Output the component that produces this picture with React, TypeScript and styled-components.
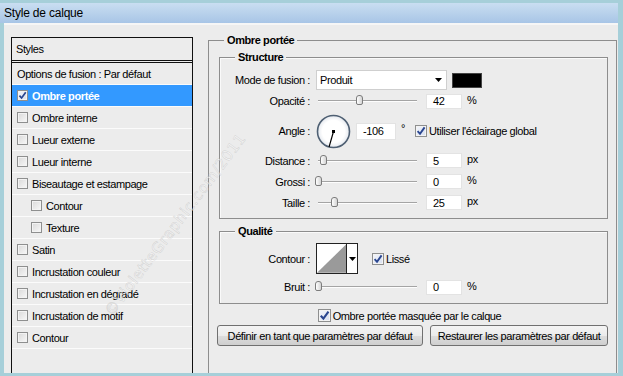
import React from 'react';
import styled, { createGlobalStyle } from 'styled-components';

const GlobalStyle = createGlobalStyle`
  html, body {
    margin: 0;
    padding: 0;
    background: #a6cfd9;
  }
  body {
    font-family: 'Liberation Sans', Arial, sans-serif;
    font-size: 11px;
    letter-spacing: -0.4px;
    color: #000;
  }
`;

const Frame = styled.div`
  position: relative;
  width: 623px;
  height: 376px;
  box-sizing: border-box;
  padding: 3px 5px 3px 0;
  background: #a6cfd9;
  display: flex;
  flex-direction: column;
  overflow: hidden;
`;

const TitleBar = styled.div`
  height: 20px;
  padding-left: 4px;
  display: flex;
  align-items: center;
  background: linear-gradient(to bottom, #c9def1, #a8c5e6);
  font-size: 12px;
  letter-spacing: -0.2px;
`;

const Body = styled.div`
  flex: 1;
  margin-left: 4px;
  border-top: 2px solid #f6f6f6;
  background: #ececec;
  display: flex;
  padding: 12px 0 0 7px;
  min-height: 0;
`;

/* ---------- left list ---------- */

const StylesPanel = styled.div`
  width: 182px;
  box-sizing: border-box;
  border: 1px solid #111;
  border-bottom: none;
  background: #ececec;
  display: flex;
  flex-direction: column;
`;

const PanelHead = styled.div`
  height: 22px;
  padding-left: 4px;
  display: flex;
  align-items: center;
  border-bottom: 3px double #111;
`;

const ListRow = styled.div<{ $selected?: boolean; $indent?: boolean }>`
  height: 21px;
  border-bottom: 1px solid #fbfbfb;
  display: flex;
  align-items: center;
  gap: 4px;
  padding-left: ${(p) => (p.$indent ? '19px' : '5px')};
  background: ${(p) => (p.$selected ? '#3399ff' : 'transparent')};
  color: ${(p) => (p.$selected ? '#fff' : '#000')};
  font-weight: ${(p) => (p.$selected ? 'bold' : 'normal')};
`;

const Box = styled.span<{ $checked?: boolean; $size: number }>`
  width: ${(p) => p.$size}px;
  height: ${(p) => p.$size}px;
  box-sizing: border-box;
  border: 1px solid #8e8f8f;
  flex: none;
  display: inline-flex;
  align-items: center;
  justify-content: center;
  background: ${(p) =>
    p.$checked
      ? 'linear-gradient(135deg, #f4f6fb, #d6deef)'
      : 'linear-gradient(135deg, #d9d9d9, #f8f8f8)'};
  box-shadow: inset 0 0 0 1px #f3f3f3;
`;

function Check({ checked, size = 12 }: { checked?: boolean; size?: number }) {
  return (
    <Box $checked={checked} $size={size}>
      {checked && (
        <svg width={size - 2} height={size - 2} viewBox="0 0 10 10">
          <path d="M1.6 5.2 L4 7.8 L8.6 1.4" stroke="#2a4690" strokeWidth="1.9" fill="none" />
        </svg>
      )}
    </Box>
  );
}

/* ---------- right side ---------- */

const RightCol = styled.div`
  margin-left: 15px;
  padding-top: 3px;
  display: flex;
  flex-direction: column;
`;

const Group = styled.div<{ $open?: boolean }>`
  position: relative;
  border: 1px solid #8d8d8d;
  border-bottom: ${(p) => (p.$open ? 'none' : '1px solid #8d8d8d')};
  box-shadow: ${(p) => (p.$open ? 'none' : 'inset 1px 1px 0 #fafafa')};
  display: flex;
  flex-direction: column;
`;

const Outer = styled(Group)`
  width: 409px;
  box-sizing: border-box;
  flex: 1;
  padding: 16px 8px 0 10px;
`;

const Legend = styled.span`
  position: absolute;
  top: -8px;
  left: 15px;
  padding: 0 3px;
  line-height: 14px;
  background: #ececec;
  font-weight: bold;
`;

const Structure = styled(Group)`
  height: 162px;
  box-sizing: border-box;
  padding-top: 12px;
`;

const Quality = styled(Group)`
  height: 73px;
  box-sizing: border-box;
  margin-top: 12px;
  padding-top: 11px;
`;

const Row = styled.div<{ $h: number; $mt?: number }>`
  height: ${(p) => p.$h}px;
  margin-top: ${(p) => p.$mt ?? 0}px;
  display: flex;
  align-items: center;
`;

const Label = styled.span`
  width: 90px;
  margin-right: 6px;
  text-align: right;
  flex: none;
`;

const Select = styled.div`
  width: 131px;
  height: 20px;
  box-sizing: border-box;
  border: 1px solid #cfcfcf;
  background: #fff;
  display: flex;
  align-items: center;
  justify-content: space-between;
  padding: 0 4px 0 3px;
`;

const Swatch = styled.div`
  width: 30px;
  height: 15px;
  margin-left: 5px;
  box-sizing: border-box;
  background: #000;
  border: 1px solid #444;
`;

const Track = styled.div`
  position: relative;
  width: 99px;
  height: 14px;
  margin: 0 9px 0 2px;
  flex: none;
  &::before {
    content: '';
    position: absolute;
    left: 0;
    right: 0;
    top: 6px;
    height: 1px;
    background: #a4a4a4;
    border-bottom: 1px solid #fdfdfd;
  }
`;

const Thumb = styled.div`
  position: absolute;
  top: 1px;
  width: 7px;
  height: 10px;
  box-sizing: border-box;
  border: 1px solid #7c7c7c;
  border-radius: 3px 3px 2px 2px;
  background: linear-gradient(to right, #ffffff, #d4d4d4);
`;

const Field = styled.div<{ $w: number; $h?: number; $ml?: number }>`
  width: ${(p) => p.$w}px;
  height: ${(p) => p.$h ?? 15}px;
  margin-left: ${(p) => p.$ml ?? 0}px;
  box-sizing: border-box;
  border: 1px solid #e3e3e3;
  background: #fff;
  padding-left: 6px;
  display: flex;
  align-items: center;
  flex: none;
`;

const Unit = styled.span`
  margin-left: 5px;
  margin-top: -3px;
`;

const Dial = styled.svg`
  flex: none;
`;

const Degree = styled.span`
  margin-left: 5px;
  margin-top: -6px;
`;

const CheckLabel = styled.label<{ $ml?: number }>`
  display: flex;
  align-items: center;
  gap: 2px;
  margin-left: ${(p) => p.$ml ?? 0}px;
`;

const Contour = styled.div`
  width: 42px;
  height: 31px;
  box-sizing: border-box;
  border: 1px solid #222;
  display: flex;
  background: #fff;
  flex: none;
`;

const ContourArrow = styled.div`
  width: 10px;
  border-left: 1px solid #222;
  display: flex;
  align-items: center;
  justify-content: center;
`;

const MaskRow = styled.div`
  height: 15px;
  margin-top: 4px;
  display: flex;
  justify-content: center;
  padding-right: 8px;
`;

const Buttons = styled.div`
  display: flex;
  gap: 7px;
  margin: 2px 0 0 -2px;
`;

const Button = styled.div<{ $w: number }>`
  width: ${(p) => p.$w}px;
  height: 21px;
  box-sizing: border-box;
  border: 1px solid #707070;
  border-radius: 3px;
  background: linear-gradient(to bottom, #f4f4f4 0%, #ebebeb 50%, #dddddd 51%, #cfcfcf 100%);
  display: flex;
  align-items: center;
  justify-content: center;
  white-space: nowrap;
`;

const Watermark = styled.div`
  position: absolute;
  left: 108px;
  top: 305px;
  transform: rotate(-53deg);
  transform-origin: left center;
  font-family: 'DejaVu Sans', sans-serif;
  font-size: 15px;
  line-height: 18px;
  letter-spacing: 0.5px;
  color: rgba(255, 255, 255, 0.5);
  -webkit-text-stroke: 0.5px rgba(160, 160, 160, 0.4);
  pointer-events: none;
  white-space: nowrap;
`;

function Arrow() {
  return (
    <svg width="7" height="4" viewBox="0 0 7 4">
      <path d="M0 0 H7 L3.5 4 Z" fill="#000" />
    </svg>
  );
}

function Slider({ pct }: { pct: number }) {
  return (
    <Track>
      <Thumb style={{ left: `calc(${pct}% - 3.5px)` }} />
    </Track>
  );
}

function AngleDial({ deg }: { deg: number }) {
  const r = 16;
  const cx = 17.5;
  const cy = 17.5;
  const a = (deg * Math.PI) / 180;
  const x2 = cx + Math.cos(a) * r;
  const y2 = cy - Math.sin(a) * r;
  return (
    <Dial width="35" height="35" viewBox="0 0 35 35">
      <defs>
        <radialGradient id="dialFill" cx="0.5" cy="0.5" r="0.5">
          <stop offset="0.7" stopColor="#ffffff" />
          <stop offset="1" stopColor="#e4e8ee" />
        </radialGradient>
      </defs>
      <circle cx={cx} cy={cy} r={r} fill="url(#dialFill)" stroke="#4f6073" strokeWidth="1.6" />
      <line x1={cx} y1={cy} x2={x2} y2={y2} stroke="#000" strokeWidth="1.2" />
      <rect x={cx - 1.5} y={cy - 1.5} width="3" height="3" fill="#000" />
    </Dial>
  );
}

const layers = [
  { name: 'Ombre portée', checked: true },
  { name: 'Ombre interne' },
  { name: 'Lueur externe' },
  { name: 'Lueur interne' },
  { name: 'Biseautage et estampage' },
  { name: 'Contour', indent: true },
  { name: 'Texture', indent: true },
  { name: 'Satin' },
  { name: 'Incrustation couleur' },
  { name: 'Incrustation en dégradé' },
  { name: 'Incrustation de motif' },
  { name: 'Contour' },
];

export default function App() {
  return (
    <>
      <GlobalStyle />
      <Frame>
        <TitleBar>Style de calque</TitleBar>
        <Body>
          <StylesPanel>
            <PanelHead>Styles</PanelHead>
            <ListRow>Options de fusion : Par défaut</ListRow>
            {layers.map((l, i) => (
              <ListRow key={i} $selected={l.checked} $indent={l.indent}>
                <Check checked={l.checked} size={11} />
                {l.name}
              </ListRow>
            ))}
          </StylesPanel>

          <RightCol>
            <Outer $open>
              <Legend>Ombre portée</Legend>

              <Structure>
                <Legend>Structure</Legend>
                <Row $h={20}>
                  <Label>Mode de fusion :</Label>
                  <Select>
                    Produit
                    <Arrow />
                  </Select>
                  <Swatch />
                </Row>
                <Row $h={18} $mt={2}>
                  <Label>Opacité :</Label>
                  <Slider pct={42} />
                  <Field $w={36}>42</Field>
                  <Unit>%</Unit>
                </Row>
                <Row $h={36} $mt={3}>
                  <Label>Angle :</Label>
                  <AngleDial deg={-106} />
                  <Field $w={40} $h={17} $ml={5}>-106</Field>
                  <Degree>°</Degree>
                  <CheckLabel $ml={10}>
                    <Check checked />
                    Utiliser l'éclairage global
                  </CheckLabel>
                </Row>
                <Row $h={17} $mt={3}>
                  <Label>Distance :</Label>
                  <Slider pct={6} />
                  <Field $w={36}>5</Field>
                  <Unit>px</Unit>
                </Row>
                <Row $h={17} $mt={4}>
                  <Label>Grossi :</Label>
                  <Slider pct={0} />
                  <Field $w={36}>0</Field>
                  <Unit>%</Unit>
                </Row>
                <Row $h={17} $mt={4}>
                  <Label>Taille :</Label>
                  <Slider pct={17} />
                  <Field $w={36}>25</Field>
                  <Unit>px</Unit>
                </Row>
              </Structure>

              <Quality>
                <Legend>Qualité</Legend>
                <Row $h={31}>
                  <Label>Contour :</Label>
                  <Contour>
                    <svg width="30" height="29" viewBox="0 0 30 29">
                      <polygon points="0,29 30,0 30,29" fill="#9a9a9a" />
                    </svg>
                    <ContourArrow>
                      <Arrow />
                    </ContourArrow>
                  </Contour>
                  <CheckLabel $ml={14}>
                    <Check checked />
                    Lissé
                  </CheckLabel>
                </Row>
                <Row $h={16} $mt={5}>
                  <Label>Bruit :</Label>
                  <Slider pct={0} />
                  <Field $w={36}>0</Field>
                  <Unit>%</Unit>
                </Row>
              </Quality>

              <MaskRow>
                <CheckLabel>
                  <Check checked size={13} />
                  Ombre portée masquée par le calque
                </CheckLabel>
              </MaskRow>

              <Buttons>
                <Button $w={206}>Définir en tant que paramètres par défaut</Button>
                <Button $w={178}>Restaurer les paramètres par défaut</Button>
              </Buttons>
            </Outer>
          </RightCol>
        </Body>
        <Watermark>©VioletteGraphic.com/2011</Watermark>
      </Frame>
    </>
  );
}
